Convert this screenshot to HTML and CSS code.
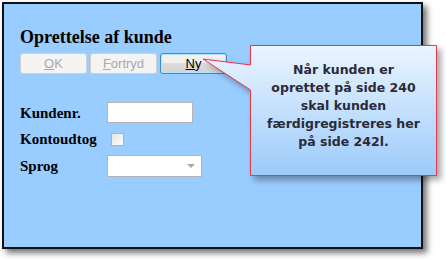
FILE: index.html
```html
<!DOCTYPE html>
<html lang="da">
  <head>
    <meta charset="UTF-8" />
    <title>Oprettelse af kunde</title>
    <link rel="stylesheet" href="styles.css">
  </head>
  <body>
    <div class="window">
      <h1 class="title">Oprettelse af kunde</h1>

      <div class="buttons">
        <button class="btn" disabled><u>O</u>K</button>
        <button class="btn" disabled><u>F</u>ortryd</button>
        <button class="btn btn-active"><u>N</u>y</button>
      </div>

      <!-- Customer form -->
      <div class="form">
        <label class="lbl lbl-first" for="kundenr">Kundenr.</label>
        <input class="field field-first" type="text" id="kundenr" />

        <label class="lbl" for="konto">Kontoudtog</label>
        <span class="check-wrap"><span class="check" id="konto"></span></span>

        <label class="lbl" for="sprog">Sprog</label>
        <span class="select" id="sprog"><span class="arrow"></span></span>
      </div>
    </div>

    <!-- Callout pointing at the Ny button -->
    <div class="callout">
      <svg class="callout-shape" width="446" height="260" viewBox="0 0 446 260">
        <defs>
          <linearGradient id="bubble" x1="0" y1="45" x2="0" y2="175" gradientUnits="userSpaceOnUse">
            <stop offset="0" stop-color="#ecf5ff" />
            <stop offset="1" stop-color="#9ccbfa" />
          </linearGradient>
        </defs>
        <path d="M250.5 45.5 H436.5 V175.5 H250.5 V90 L203 59 L250.5 65 Z"
              fill="url(#bubble)" stroke="#e8364a" stroke-width="1" />
      </svg>
      <div class="callout-text">
        Når kunden er<br />
        oprettet på side 240<br />
        skal kunden<br />
        færdigregistreres her<br />
        på side 242l.
      </div>
    </div>
  </body>
</html>
```

FILE: styles.css
```css
/* Reset & Base Styles */
* {
  margin: 0;
  padding: 0;
  box-sizing: border-box;
}

body {
  width: 446px;
  height: 260px;
  padding: 2px;
  background-color: #fff;
  font-family: "Liberation Serif", serif;
  color: #000;
  position: relative;
  overflow: hidden;
}

/* Window */
.window {
  width: 421px;
  height: 247px;
  background-color: #99ccff;
  border: 2px solid #111;
  box-shadow: 4px 4px 6px rgba(0, 0, 0, 0.55);
  padding: 23px 16px 0;
}

.title {
  font-size: 18px;
  font-weight: bold;
  line-height: 20px;
}

/* Buttons */
.buttons {
  display: flex;
  gap: 3px;
  margin-top: 6px;
}

.btn {
  width: 67px;
  height: 21px;
  font-family: "Liberation Sans", sans-serif;
  font-size: 13px;
  border-radius: 3px;
  border: 1px solid #cfcfcf;
  background-color: #f4f4f4;
  color: #a8a8a8;
}

.btn-active {
  color: #000;
  border: 1px solid #3c8ccc;
  background: linear-gradient(#f2f2f2, #f0f0f0 45%, #dcdcdc 50%, #d4d4d4);
  box-shadow: inset 0 0 0 1px #b8e2fa;
}

/* Form */
.form {
  display: grid;
  grid-template-columns: 87px auto;
  align-items: center;
  justify-items: start;
  margin-top: 28px;
}

.lbl {
  font-size: 15px;
  font-weight: bold;
  line-height: 18px;
}

.field {
  width: 86px;
  height: 21px;
  border: 1px solid #b4b4b4;
  background: #fff;
}

.check-wrap {
  height: 32px;
  display: flex;
  align-items: center;
  padding-left: 4px;
}

.check {
  display: block;
  width: 13px;
  height: 13px;
  border: 1px solid #b0b0b0;
  background: linear-gradient(135deg, #e6e6e6, #fdfdfd);
}

.select {
  display: flex;
  align-items: center;
  justify-content: flex-end;
  width: 95px;
  height: 22px;
  border: 1px solid #b4b4b4;
  background: #fff;
  padding-right: 6px;
}

.arrow {
  width: 0;
  height: 0;
  border-left: 4px solid transparent;
  border-right: 4px solid transparent;
  border-top: 4px solid #a8a8a8;
}

/* Callout */
.callout-shape {
  position: absolute;
  left: 0;
  top: 0;
  filter: drop-shadow(4px 4px 3px rgba(0, 0, 0, 0.35));
}

.callout-text {
  position: absolute;
  left: 251px;
  top: 61px;
  width: 185px;
  text-align: center;
  font-family: "DejaVu Sans", sans-serif;
  font-size: 12.5px;
  font-weight: bold;
  line-height: 18px;
  color: #2a2a3a;
}
```
